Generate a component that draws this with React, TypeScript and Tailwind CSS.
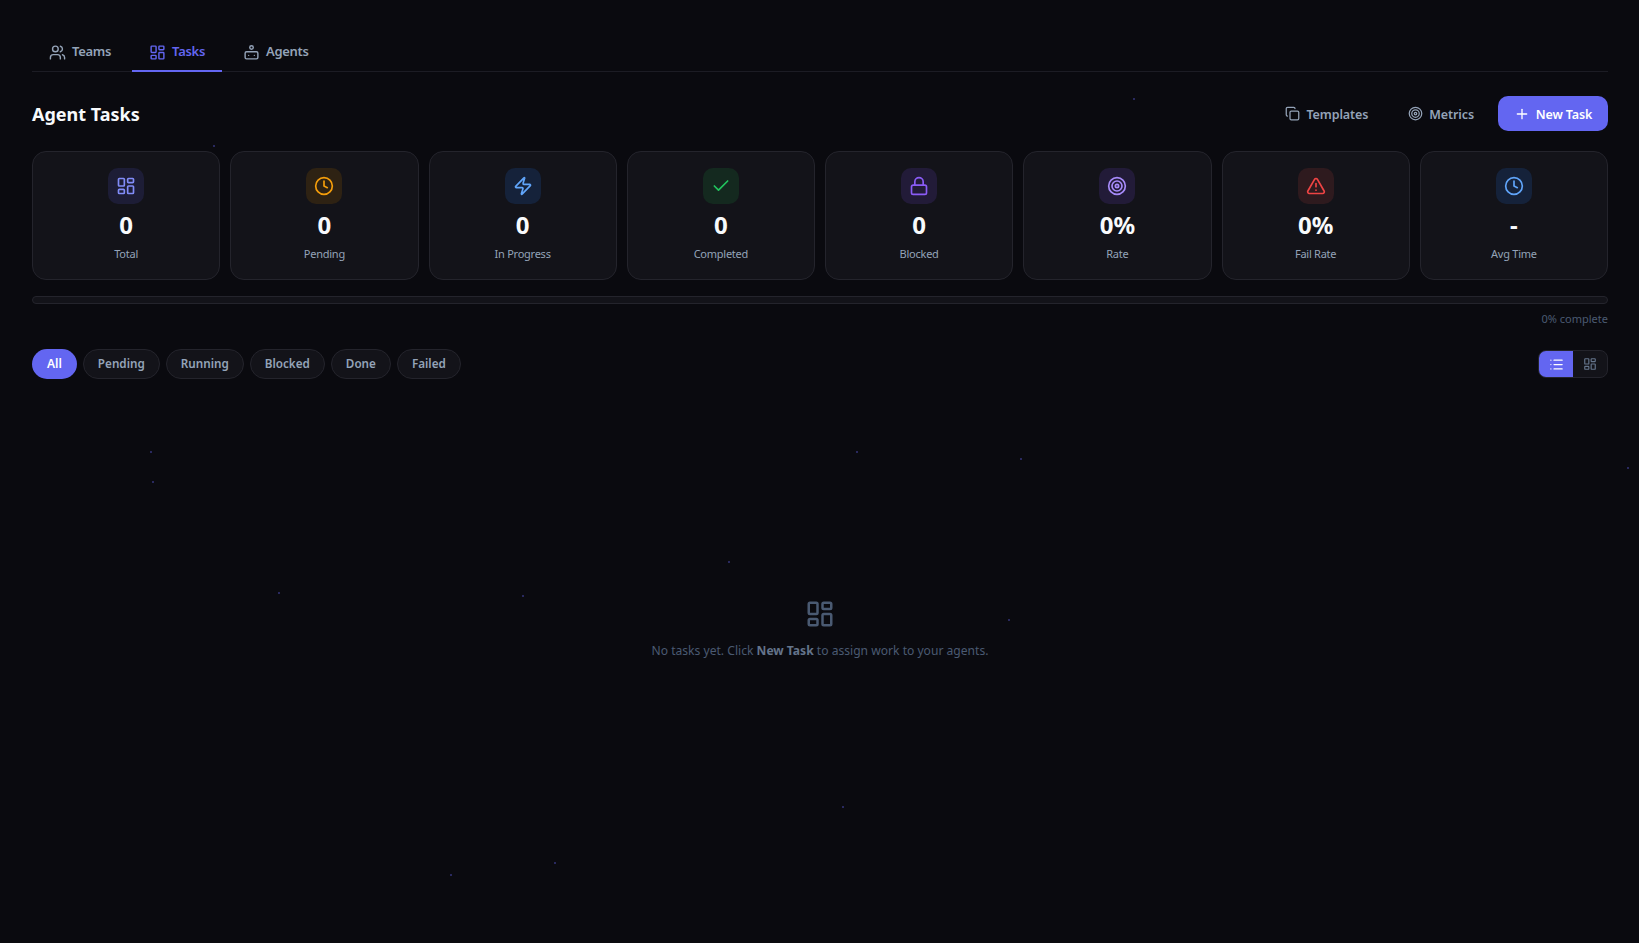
import { Check, Clock, Copy, LayoutDashboard, List, Lock, Plus, Target, TriangleAlert, Users, Zap } from "lucide-react";
import type { ReactNode } from "react";

const AgentIcon = ({ size = 17 }: { size?: number }) => (
	<svg width={size} height={size} viewBox="0 0 24 24" fill="none" stroke="currentColor" strokeWidth="2" strokeLinecap="round" strokeLinejoin="round">
		<circle cx="12" cy="5" r="2.5" />
		<rect x="3" y="11" width="18" height="10" rx="2" />
		<path d="M8 16h.01" />
		<path d="M16 16h.01" />
	</svg>
);

const stats: { label: string; value: string; box: string; icon: ReactNode }[] = [
	{ label: "Total", value: "0", box: "bg-[#1d1d36] text-[#818cf8]", icon: <LayoutDashboard size={20} /> },
	{ label: "Pending", value: "0", box: "bg-[#2e2213] text-[#f59e0b]", icon: <Clock size={20} /> },
	{ label: "In Progress", value: "0", box: "bg-[#15223a] text-[#60a5fa]", icon: <Zap size={20} /> },
	{ label: "Completed", value: "0", box: "bg-[#14291f] text-[#22c55e]", icon: <Check size={20} /> },
	{ label: "Blocked", value: "0", box: "bg-[#221b38] text-[#8b5cf6]", icon: <Lock size={20} /> },
	{ label: "Rate", value: "0%", box: "bg-[#221b38] text-[#a78bfa]", icon: <Target size={20} /> },
	{ label: "Fail Rate", value: "0%", box: "bg-[#2e1a1e] text-[#ef4444]", icon: <TriangleAlert size={20} /> },
	{ label: "Avg Time", value: "-", box: "bg-[#15223a] text-[#60a5fa]", icon: <Clock size={20} /> },
];

const filters = ["Pending", "Running", "Blocked", "Done", "Failed"];

const dots = [
	[150, 451], [152, 481], [856, 451], [1020, 458], [1627, 467], [728, 561], [278, 592], [522, 595],
	[1008, 619], [842, 806], [450, 874], [554, 862], [1133, 98], [213, 145],
];

const App = () => {
	return (
		<div className="relative min-h-[943px] overflow-hidden bg-[#0a0a0f] pl-8 pr-[31px] pt-8 font-['Noto_Sans',sans-serif] text-white">
			{dots.map(([x, y]) => (
				<span key={`${x}-${y}`} className="absolute size-[2px] rounded-full bg-[#34357a]" style={{ left: x, top: y }} />
			))}

			<nav className="flex h-10 gap-1 border-b border-[#1c1c24]">
				<a className="-mb-px flex items-center gap-1.5 border-b-2 border-transparent px-[17px] pt-[2px] text-[13px] font-semibold tracking-[-0.3px] text-[#94a3b8]">
					<Users size={17} />
					Teams
				</a>
				<a className="-mb-px flex items-center gap-1.5 border-b-2 border-[#6366f1] px-[17px] pt-[2px] text-[13px] font-semibold tracking-[-0.3px] text-[#6366f1]">
					<LayoutDashboard size={17} />
					Tasks
				</a>
				<a className="-mb-px flex items-center gap-1.5 border-b-2 border-transparent px-[17px] pt-[2px] text-[13px] font-semibold tracking-[-0.3px] text-[#94a3b8]">
					<AgentIcon />
					Agents
				</a>
			</nav>

			<header className="mt-6 flex h-[35px] items-center justify-between">
				<h1 className="text-lg font-bold text-[#f8fafc]">Agent Tasks</h1>
				<div className="flex items-center gap-2">
					<button type="button" className="flex h-[35px] items-center gap-1.5 px-4 pt-[3px] text-[12.5px] font-semibold tracking-[-0.1px] text-[#94a3b8]">
						<Copy size={15} className="-mt-[3px]" />
						Templates
					</button>
					<button type="button" className="flex h-[35px] items-center gap-1.5 px-4 pt-[3px] text-[12.5px] font-semibold tracking-[-0.1px] text-[#94a3b8]">
						<Target size={15} className="-mt-[3px]" />
						Metrics
					</button>
					<button type="button" className="flex h-[35px] w-[110px] items-center justify-center gap-1.5 rounded-[10px] bg-[#6366f1] pt-[3px] text-[12.5px] font-semibold tracking-[-0.1px] text-white">
						<Plus size={16} className="-mt-[3px]" />
						New Task
					</button>
				</div>
			</header>

			<section className="mt-5 grid grid-cols-8 gap-2.5">
				{stats.map((s) => (
					<div key={s.label} className="flex h-[129px] flex-col items-center rounded-[14px] border border-[#24242c] bg-[#131319] pt-4">
						<div className={`flex size-9 items-center justify-center rounded-[10px] ${s.box}`}>{s.icon}</div>
						<div className="mt-[5px] text-2xl leading-8 font-bold text-[#f8fafc]">{s.value}</div>
						<div className="mt-[5px] text-[11px] leading-4 tracking-[-0.25px] text-[#94a3b8]">{s.label}</div>
					</div>
				))}
			</section>

			<div className="mt-4 h-2 rounded-full border border-[#24242c] bg-[#131319]" />
			<p className="mt-[7px] text-right text-[11px] leading-4 text-[#4a5a72]">0% complete</p>

			<div className="mt-[22px] flex items-center justify-between">
				<div className="flex items-center gap-1.5">
					<button type="button" className="h-[30px] rounded-full bg-[#6366f1] px-[15px] text-xs font-semibold text-white">All</button>
					{filters.map((f) => (
						<button key={f} type="button" className="h-[30px] rounded-full border border-[#24242c] bg-[#131319] px-[14px] text-[11.7px] font-semibold text-[#94a3b8]">
							{f}
						</button>
					))}
				</div>
				<div className="flex h-7 w-[70px] overflow-hidden rounded-lg border border-[#24242c] bg-[#131319]">
					<button type="button" className="flex flex-1 items-center justify-center bg-[#6366f1] text-white"><List size={15} /></button>
					<button type="button" className="flex flex-1 items-center justify-center text-[#64748b]"><LayoutDashboard size={14} /></button>
				</div>
			</div>

			<div className="mt-[220px] flex flex-col items-center text-[#4a5a72]">
				<LayoutDashboard size={30} />
				<p className="mt-3 text-[12.1px] leading-5">
					No tasks yet. Click <strong className="font-bold text-[#64748b]">New Task</strong> to assign work to your agents.
				</p>
			</div>
		</div>
	);
};

export default App;
